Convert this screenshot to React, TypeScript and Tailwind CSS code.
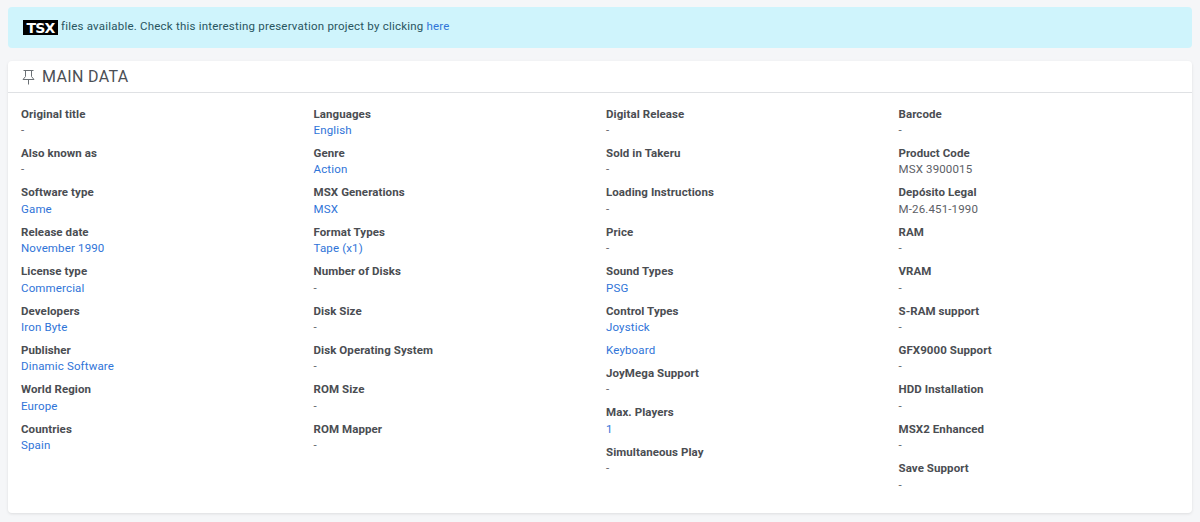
import React from 'react'

type Field = { label: string; values: string[]; link?: boolean }

const f = (label: string, value?: string, ...more: string[]): Field =>
  value ? { label, values: [value, ...more], link: true } : { label, values: ['-'] }

const plain = (label: string, value: string): Field => ({ label, values: [value] })

const columns: Field[][] = [
  [
    f('Original title'),
    f('Also known as'),
    f('Software type', 'Game'),
    f('Release date', 'November 1990'),
    f('License type', 'Commercial'),
    f('Developers', 'Iron Byte'),
    f('Publisher', 'Dinamic Software'),
    f('World Region', 'Europe'),
    f('Countries', 'Spain')
  ],
  [
    f('Languages', 'English'),
    f('Genre', 'Action'),
    f('MSX Generations', 'MSX'),
    f('Format Types', 'Tape (x1)'),
    f('Number of Disks'),
    f('Disk Size'),
    f('Disk Operating System'),
    f('ROM Size'),
    f('ROM Mapper')
  ],
  [
    f('Digital Release'),
    f('Sold in Takeru'),
    f('Loading Instructions'),
    f('Price'),
    f('Sound Types', 'PSG'),
    f('Control Types', 'Joystick', 'Keyboard'),
    f('JoyMega Support'),
    f('Max. Players', '1'),
    f('Simultaneous Play')
  ],
  [
    f('Barcode'),
    plain('Product Code', 'MSX 3900015'),
    plain('Depósito Legal', 'M-26.451-1990'),
    f('RAM'),
    f('VRAM'),
    f('S-RAM support'),
    f('GFX9000 Support'),
    f('HDD Installation'),
    f('MSX2 Enhanced'),
    f('Save Support')
  ]
]

const PinIcon = () => (
  <svg width="13" height="16" viewBox="0 0 13 16" fill="none" stroke="#6b7075" strokeWidth="1">
    <path d="M1.500 1.500h10M3.500 1.500v6L1 10.500h11L9.500 7.500v-6M6.500 10.500v5" />
  </svg>
)

const DataItem = ({ field }: { field: Field }) => (
  <div className="mb-[7.1px]">
    <div className="h-4 text-[11.5px] leading-4 font-bold tracking-[0.08px] text-[#4a4d52]">{field.label}</div>
    {field.values.map((value) => (
      <div
        key={value}
        className={
          field.link
            ? 'mt-[0.3px] mb-[7px] h-[16px] text-[11.5px] leading-4 tracking-[0.15px] text-[#2f74d8] last:mb-0'
            : 'mt-[0.3px] h-[16px] text-[11.5px] leading-4 tracking-[0.15px] text-[#5c6066]'
        }
      >
        {value}
      </div>
    ))}
  </div>
)

export default function App() {
  return (
    <div className="min-h-[522px] bg-[#f5f6f8] px-2 pt-[7px] font-['Roboto',sans-serif]">
      <div className="flex h-[41px] items-center rounded bg-[#cff4fc] pb-[1px] pl-[15px] text-[11.5px] tracking-[0.21px] text-[#29555f]">
        <span className="mt-[1px] mr-[3px] flex h-[15px] w-[35px] items-center justify-center bg-black font-['DejaVu_Sans',sans-serif] text-[14px] leading-none font-bold tracking-[-0.8px] text-white">
          TSX
        </span>
        <span>
          files available. Check this interesting preservation project by clicking{' '}
          <a className="text-[#2f74d8]">here</a>
        </span>
      </div>

      <div className="mt-[13px] h-[452px] rounded-sm bg-white shadow-[0_1px_3px_rgba(0,0,0,0.1)]">
        <div className="flex h-8 items-center gap-[7px] border-b border-[#dfe1e4] pl-[14px]">
          <PinIcon />
          <h2 className="text-base leading-none font-normal tracking-[0.35px] text-[#4b4f55]">MAIN DATA</h2>
        </div>
        <div className="grid w-[1175px] grid-cols-4 pt-[12.7px] pl-[5px]">
          {columns.map((column) => (
            <div key={column[0].label} className="px-2">
              {column.map((field) => (
                <DataItem key={field.label} field={field} />
              ))}
            </div>
          ))}
        </div>
      </div>
    </div>
  )
}
